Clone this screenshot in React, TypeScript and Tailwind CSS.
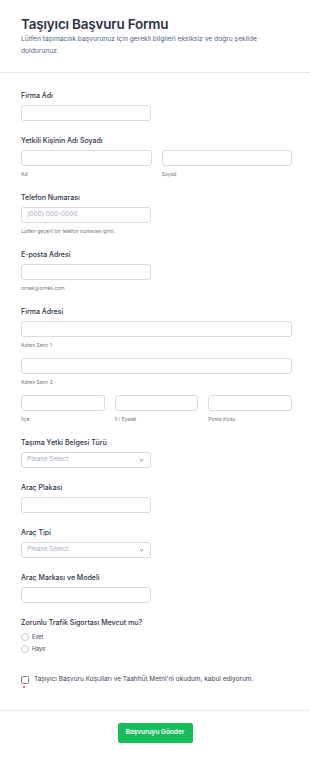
import React from "react";

const font = { fontFamily: "Inter, 'Noto Sans', sans-serif" };

function Label({ children }: { children: React.ReactNode }) {
  return <div className="text-[7px] leading-[10px] font-medium text-[#2c3345]">{children}</div>;
}

function Sub({ children }: { children: React.ReactNode }) {
  return <div className="mt-[4px] text-[5px] leading-[8px] text-[#6f7685]">{children}</div>;
}

function Input({ className = "", placeholder }: { className?: string; placeholder?: string }) {
  return (
    <div
      className={`h-[16.5px] rounded-[3px] border border-[#d8dbe3] bg-white flex items-center px-[5px] text-[6.5px] text-[#a6adbb] ${className}`}
    >
      {placeholder}
    </div>
  );
}

function Select() {
  return (
    <div className="mt-[4px] w-[130px] h-[16.5px] rounded-[3px] border border-[#d8dbe3] bg-white flex items-center justify-between px-[5px] text-[6.5px] text-[#a6adbb]">
      <span>Please Select</span>
      <svg width="5" height="4" viewBox="0 0 5 4" className="mr-[1px]">
        <path d="M0.8 1.2 L2.5 2.8 L4.2 1.2" fill="none" stroke="#4b5263" strokeWidth="0.8" />
      </svg>
    </div>
  );
}

export default function App() {
  return (
    <div className="w-[310px] min-h-[759px] bg-white" style={font}>
      <header className="pl-[21px] pr-[18px] pt-[16px] pb-[15px] border-b border-[#e8eaef]">
        <h1 className="text-[13.5px] leading-[16px] font-semibold tracking-[-0.015em] text-[#2c3345]">
          Taşıyıcı Başvuru Formu
        </h1>
        <p className="mt-[2px] text-[6.7px] leading-[11.5px] text-[#556481]">
          Lütfen taşımacılık başvurunuz için gerekli bilgileri eksiksiz ve doğru şekilde doldurunuz.
        </p>
      </header>

      <main className="pl-[21px] pr-[18px] pt-[17.5px] flex flex-col gap-[14.5px]">
        <div>
          <Label>Firma Adı</Label>
          <Input className="mt-[4px] w-[130px]" />
        </div>

        <div>
          <Label>Yetkili Kişinin Adı Soyadı</Label>
          <div className="mt-[4px] grid grid-cols-2 gap-[10px]">
            <div>
              <Input />
              <Sub>Ad</Sub>
            </div>
            <div>
              <Input />
              <Sub>Soyad</Sub>
            </div>
          </div>
        </div>

        <div>
          <Label>Telefon Numarası</Label>
          <Input className="mt-[4px] w-[130px]" placeholder="(000) 000-0000" />
          <Sub>Lütfen geçerli bir telefon numarası girin.</Sub>
        </div>

        <div>
          <Label>E-posta Adresi</Label>
          <Input className="mt-[4px] w-[130px]" />
          <Sub>ornek@ornek.com</Sub>
        </div>

        <div>
          <Label>Firma Adresi</Label>
          <Input className="mt-[4px]" />
          <Sub>Adres Satırı 1</Sub>
          <Input className="mt-[8.5px]" />
          <Sub>Adres Satırı 2</Sub>
          <div className="mt-[8.5px] grid grid-cols-3 gap-[10px]">
            <div>
              <Input />
              <Sub>İlçe</Sub>
            </div>
            <div>
              <Input />
              <Sub>İl / Eyalet</Sub>
            </div>
            <div>
              <Input />
              <Sub>Posta Kodu</Sub>
            </div>
          </div>
        </div>

        <div>
          <Label>Taşıma Yetki Belgesi Türü</Label>
          <Select />
        </div>

        <div>
          <Label>Araç Plakası</Label>
          <Input className="mt-[4px] w-[130px]" />
        </div>

        <div>
          <Label>Araç Tipi</Label>
          <Select />
        </div>

        <div>
          <Label>Araç Markası ve Modeli</Label>
          <Input className="mt-[4px] w-[130px]" />
        </div>

        <div>
          <Label>Zorunlu Trafik Sigortası Mevcut mu?</Label>
          <div className="mt-[3.5px] flex flex-col">
            {["Evet", "Hayır"].map((o) => (
              <div key={o} className="h-[12.3px] flex items-center gap-[3px]">
                <span className="w-[8px] h-[8px] rounded-full border border-[#c5cad4] bg-white" />
                <span className="text-[5.5px] text-[#3c4252]">{o}</span>
              </div>
            ))}
          </div>
        </div>

        <div className="mt-[4.5px]">
          <div className="flex items-center gap-[5px] h-[10px]">
            <span className="w-[8px] h-[8px] rounded-[1.5px] border border-[#7d8290] bg-white shrink-0" />
            <span className="text-[6.5px] text-[#3c4252]">
              Taşıyıcı Başvuru Koşulları ve Taahhüt Metni'ni okudum, kabul ediyorum.
            </span>
          </div>
          <div className="ml-[1.5px] mt-[1px] w-[2.5px] h-[2.5px] rounded-full bg-[#e5433a]" />
        </div>
      </main>

      <footer className="mt-[22px] border-t border-[#eceef2] pt-[12px] pb-[16px] flex justify-center">
        <button className="w-[75px] h-[20px] rounded-[2px] bg-[#18bd5b] text-white text-[6.5px] font-semibold">
          Başvuruyu Gönder
        </button>
      </footer>
    </div>
  );
}
